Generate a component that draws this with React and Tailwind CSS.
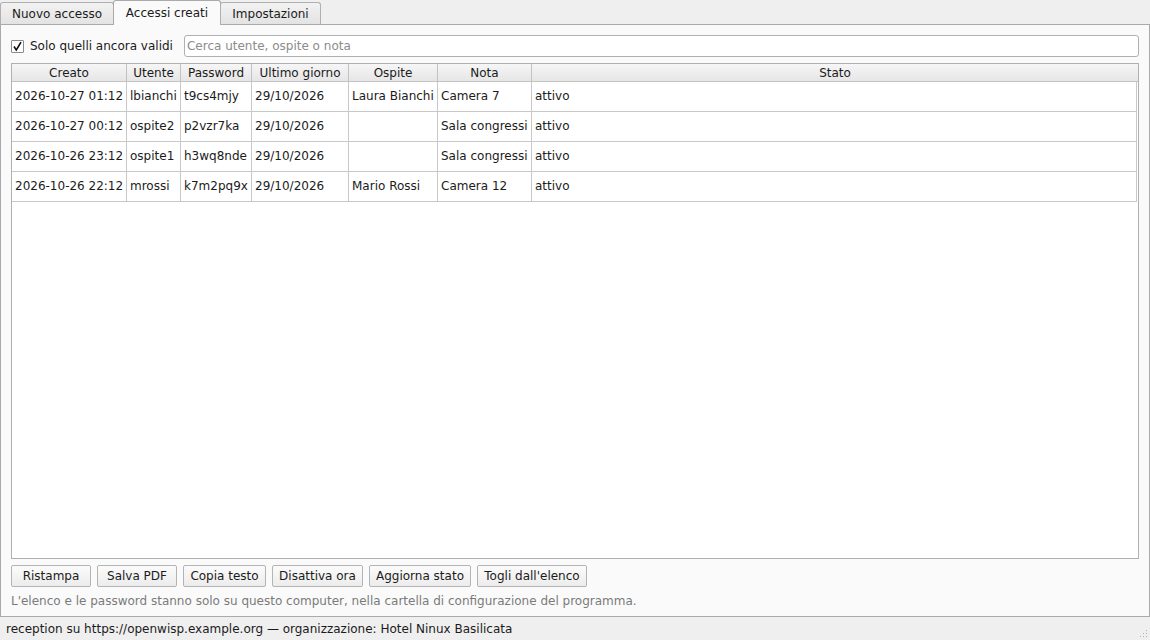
import { useState } from 'react';

const columns = [
  { key: 'creato', label: 'Creato', w: 'w-[115px]' },
  { key: 'utente', label: 'Utente', w: 'w-[54px]' },
  { key: 'password', label: 'Password', w: 'w-[71px]' },
  { key: 'giorno', label: 'Ultimo giorno', w: 'w-[97px]' },
  { key: 'ospite', label: 'Ospite', w: 'w-[89px]' },
  { key: 'nota', label: 'Nota', w: 'w-[94px]' },
  { key: 'stato', label: 'Stato', w: 'flex-1' },
];

const rows = [
  { creato: '2026-10-27 01:12', utente: 'lbianchi', password: 't9cs4mjy', giorno: '29/10/2026', ospite: 'Laura Bianchi', nota: 'Camera 7', stato: 'attivo' },
  { creato: '2026-10-27 00:12', utente: 'ospite2', password: 'p2vzr7ka', giorno: '29/10/2026', ospite: '', nota: 'Sala congressi', stato: 'attivo' },
  { creato: '2026-10-26 23:12', utente: 'ospite1', password: 'h3wq8nde', giorno: '29/10/2026', ospite: '', nota: 'Sala congressi', stato: 'attivo' },
  { creato: '2026-10-26 22:12', utente: 'mrossi', password: 'k7m2pq9x', giorno: '29/10/2026', ospite: 'Mario Rossi', nota: 'Camera 12', stato: 'attivo' },
];

const buttons = [
  { label: 'Ristampa', w: 'w-[80px]' },
  { label: 'Salva PDF', w: 'w-[80px]' },
  { label: 'Copia testo', w: 'w-[83px]' },
  { label: 'Disattiva ora', w: 'w-[91px]' },
  { label: 'Aggiorna stato', w: 'w-[102px]' },
  { label: "Togli dall'elenco", w: 'w-[110px]' },
];

export default function App() {
  const [onlyValid, setOnlyValid] = useState(true);
  const [query, setQuery] = useState('');

  return (
    <div className="w-[1150px] h-[640px] flex flex-col bg-[#efefef] text-[12px] leading-none text-[#1b1b1b] font-['DejaVu_Sans',sans-serif] overflow-hidden">
      {/* Tabs */}
      <div className="h-[24px] flex items-end relative z-10">
        <div className="h-[23px] w-[114px] mb-[-1px] border border-[#b0b0b0] border-b-[#aaaaaa] rounded-t-[3px] bg-gradient-to-b from-[#f2f2f2] to-[#e3e3e3] flex items-center justify-center pt-[1px]">
          Nuovo accesso
        </div>
        <div className="h-[25px] w-[108px] ml-[-1px] mb-[-1px] border border-[#aaaaaa] border-b-0 rounded-t-[3px] bg-[#fafafa] flex items-center justify-center pb-[1px]">
          Accessi creati
        </div>
        <div className="h-[23px] w-[101px] ml-[-1px] mb-[-1px] border border-[#b0b0b0] border-b-[#aaaaaa] rounded-t-[3px] bg-gradient-to-b from-[#f2f2f2] to-[#e3e3e3] flex items-center justify-center pt-[1px]">
          Impostazioni
        </div>
      </div>

      {/* Panel */}
      <div className="h-[593px] border border-[#aaaaaa] bg-[#fafafa] flex flex-col px-[10px] pt-[10px]">
        <div className="h-[22px] flex items-center">
          <button
            onClick={() => setOnlyValid(!onlyValid)}
            className="w-[13px] h-[13px] border border-[#8a8a8a] bg-white flex items-center justify-center rounded-[1px]"
          >
            {onlyValid && (
              <svg width="11" height="11" viewBox="0 0 11 11">
                <path d="M2 5.5 L4.3 9 L9 1.2" fill="none" stroke="#111" strokeWidth="1.6" />
              </svg>
            )}
          </button>
          <span className="ml-[6px]">Solo quelli ancora validi</span>
          <input
            value={query}
            onChange={e => setQuery(e.target.value)}
            placeholder="Cerca utente, ospite o nota"
            className="ml-[11px] flex-1 h-[22px] border border-[#b0b0b0] rounded-[3px] bg-white px-[2px] outline-none text-[12px] placeholder:text-[#8c8c8c]"
          />
        </div>

        {/* Table */}
        <div className="mt-[6px] h-[496px] border border-[#b0b0b0] bg-white flex flex-col">
          <div className="h-[18px] flex border-b border-[#c2c2c2] bg-gradient-to-b from-[#f6f6f6] to-[#e6e6e6]">
            {columns.map(c => (
              <div key={c.key} className={`${c.w} border-r border-[#c2c2c2] last:border-r-0 flex items-center justify-center`}>
                {c.label}
              </div>
            ))}
          </div>
          {rows.map(r => (
            <div key={r.utente} className="h-[30px] flex border-b border-[#c8c8c8] mr-[1px]">
              {columns.map(c => (
                <div key={c.key} className={`${c.w} border-r border-[#c8c8c8] flex items-center pl-[3px] pb-[2px] whitespace-nowrap overflow-hidden`}>
                  {r[c.key]}
                </div>
              ))}
            </div>
          ))}
        </div>

        {/* Buttons */}
        <div className="mt-[6px] flex gap-[6px]">
          {buttons.map(b => (
            <button
              key={b.label}
              className={`${b.w} h-[22px] border border-[#b4b4b4] rounded-[2px] bg-gradient-to-b from-[#fbfbfb] to-[#ececec] flex items-center justify-center`}
            >
              {b.label}
            </button>
          ))}
        </div>
        <div className="mt-[8px] text-[#7a7a7a]">
          L'elenco e le password stanno solo su questo computer, nella cartella di configurazione del programma.
        </div>
      </div>

      {/* Status bar */}
      <div className="flex-1 flex items-center justify-between px-[6px] relative">
        <span>reception su https://openwisp.example.org — organizzazione: Hotel Ninux Basilicata</span>
        <svg width="10" height="10" viewBox="0 0 10 10" className="absolute right-[2px] bottom-[2px]">
          {[[8, 2], [8, 5], [8, 8], [5, 5], [5, 8], [2, 8]].map(([x, y]) => (
            <rect key={`${x}-${y}`} x={x} y={y} width="1" height="1" fill="#b0b0b0" />
          ))}
        </svg>
      </div>
    </div>
  );
}
